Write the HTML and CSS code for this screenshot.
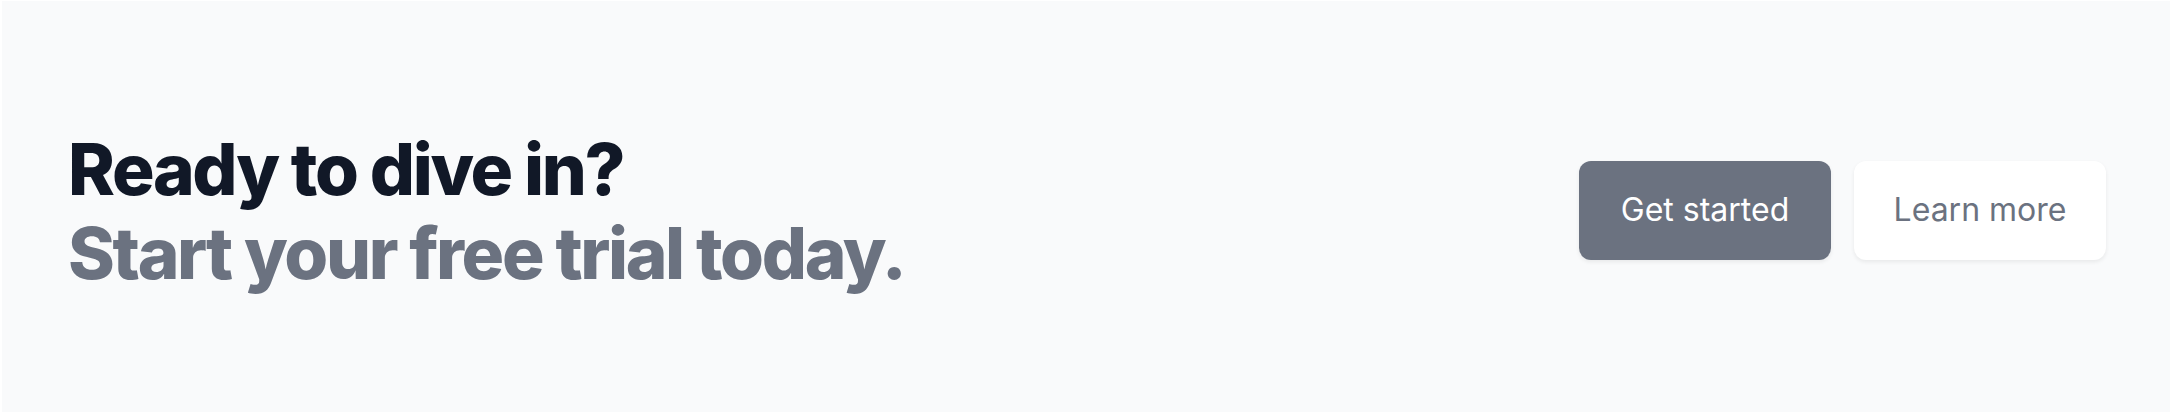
FILE: index.html
```html
<!DOCTYPE html>
<html lang="en">
<head>
<meta charset="utf-8">
<title>Ready to dive in?</title>
<link rel="stylesheet" href="styles.css">
</head>
<body>
<div class="frame">
  <section class="cta">
    <h2 class="headline">
      <span class="line line-main">Ready to dive in?</span>
      <span class="line line-sub">Start your free trial today.</span>
    </h2>
    <div class="actions">
      <a href="#" class="btn btn-primary">Get started</a>
      <a href="#" class="btn btn-secondary">Learn more</a>
    </div>
  </section>
</div>
</body>
</html>
```
FILE: styles.css
```css
html, body {
  margin: 0;
  padding: 0;
  background: #ffffff;
  height: 100%;
}
body {
  font-family: Inter, "Noto Sans", "Liberation Sans", sans-serif;
}
.frame {
  box-sizing: border-box;
  height: 414px;
  padding: 1px 4px 2px 2px;
  display: flex;
}
.cta {
  flex: 1;
  background: #f9fafb;
  display: flex;
  align-items: center;
  justify-content: space-between;
  padding: 8px 64px 0 66px;
}
.headline {
  margin: 0;
  font-size: 71px;
  line-height: 84px;
  font-weight: 800;
  letter-spacing: -0.033em;
}
.line {
  display: block;
}
.line-main {
  color: #111827;
}
.line-sub {
  color: #6b7280;
}
.actions {
  display: flex;
  gap: 23px;
  align-items: center;
}
.btn {
  display: block;
  box-sizing: border-box;
  width: 252px;
  text-align: center;
  font-size: 32px;
  line-height: 40px;
  font-weight: 400;
  padding: 29px 0 30px;
  border-radius: 12px;
  text-decoration: none;
  box-shadow: 0 2px 4px rgba(0, 0, 0, 0.07);
}
.btn-primary {
  background: #6b7280;
  color: #ffffff;
}
.btn-secondary {
  background: #ffffff;
  color: #6b7280;
}
```
